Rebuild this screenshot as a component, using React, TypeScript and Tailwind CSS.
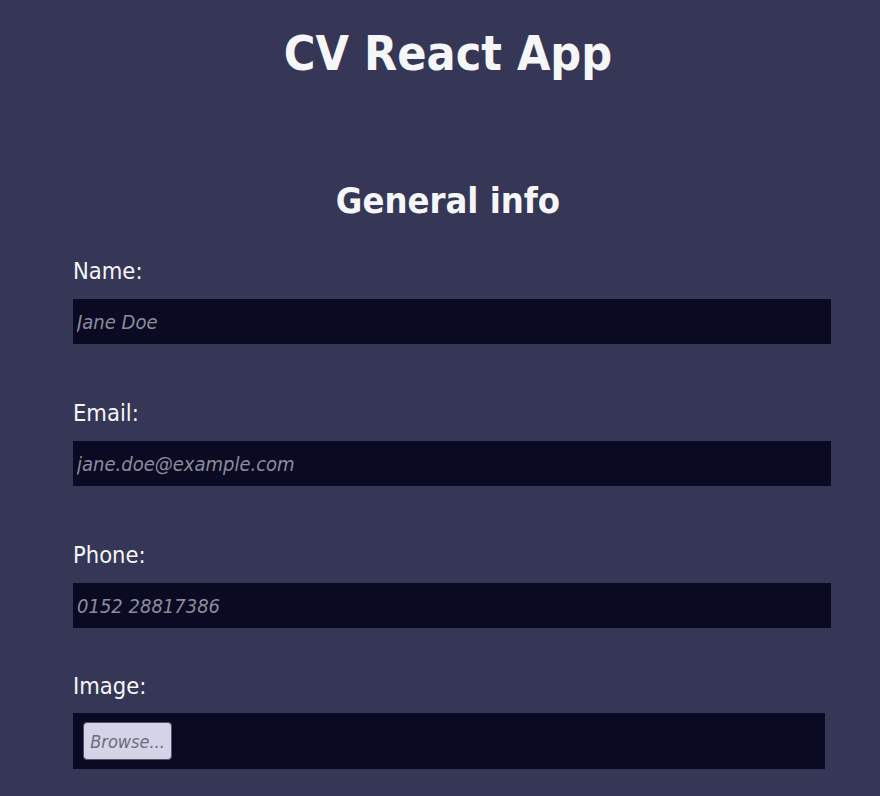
const fields = [
  { label: "Name:", placeholder: "Jane Doe" },
  { label: "Email:", placeholder: "jane.doe@example.com" },
  { label: "Phone:", placeholder: "0152 28817386" },
];

export default function App() {
  return (
    <div className="min-h-screen bg-[#363656] text-[#f5f6f7] font-['DejaVu_Sans_Condensed','DejaVu_Sans',sans-serif] pt-[25px]">
      <h1 className="pl-4 text-center text-[48px] leading-[56px] font-bold">
        CV React App
      </h1>

      <section className="mt-[99px] pl-[73px] pr-[49px]">
        <h2 className="-ml-[57px] mr-[-49px] text-center text-[36px] leading-[42px] font-bold">
          General info
        </h2>

        <form className="mt-[35px] flex flex-col">
          {fields.map((field, index) => (
            <div key={index} className="mb-[55px]">
              <label className="block text-[23.5px] leading-[28px]">
                {field.label}
              </label>
              <input
                type="text"
                placeholder={field.placeholder}
                className="mt-[14px] block h-[45px] w-full bg-[#0a0a23] px-[4px] text-[20px] italic text-[#f5f6f7] outline-none placeholder:text-[#8c8c9c]"
              />
            </div>
          ))}

          <div className="-mt-[11px]">
            <label className="block text-[23.5px] leading-[28px]">Image:</label>
            <div className="mt-[13px] mr-[6px] flex h-[56px] items-center bg-[#0a0a23] pl-[10px]">
              <span className="flex h-[38px] w-[89px] items-center justify-center rounded-[4px] border border-[#50506a] bg-[#d4d4e8] text-[18px] italic text-[#6b6b7a]">
                Browse...
              </span>
            </div>
          </div>
        </form>
      </section>
    </div>
  );
}
